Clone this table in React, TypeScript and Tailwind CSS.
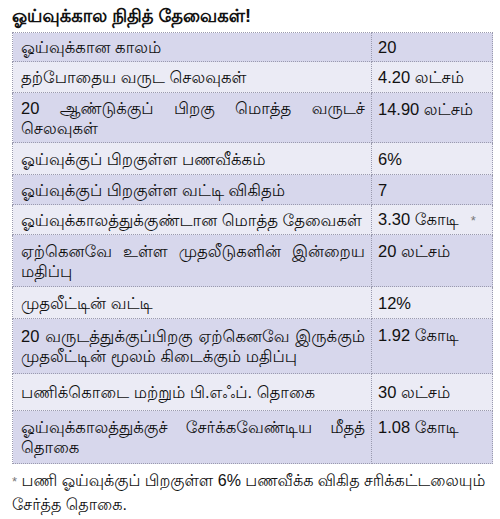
type Row = { label: string; value: string; h: number; two?: boolean; star?: boolean };

const rows: Row[] = [
  { label: "ஓய்வுக்கான காலம்", value: "20", h: 29 },
  { label: "தற்போதைய வருட செலவுகள்", value: "4.20 லட்சம்", h: 31 },
  { label: "20 ஆண்டுக்குப் பிறகு மொத்த வருடச் செலவுகள்", value: "14.90 லட்சம்", h: 50, two: true },
  { label: "ஓய்வுக்குப் பிறகுள்ள பணவீக்கம்", value: "6%", h: 32 },
  { label: "ஓய்வுக்குப் பிறகுள்ள வட்டி விகிதம்", value: "7", h: 30 },
  { label: "ஓய்வுக்காலத்துக்குண்டான மொத்த தேவைகள்", value: "3.30 கோடி", h: 30, star: true },
  { label: "ஏற்கெனவே உள்ள முதலீடுகளின் இன்றைய மதிப்பு", value: "20 லட்சம்", h: 52, two: true },
  { label: "முதலீட்டின் வட்டி", value: "12%", h: 32 },
  {
    label: "20 வருடத்துக்குப்பிறகு ஏற்கெனவே இருக்கும் முதலீட்டின் மூலம் கிடைக்கும் மதிப்பு",
    value: "1.92 கோடி",
    h: 55,
    two: true,
  },
  { label: "பணிக்கொடை மற்றும் பி.எஃப். தொகை", value: "30 லட்சம்", h: 37 },
  { label: "ஓய்வுக்காலத்துக்குச் சேர்க்கவேண்டிய மீதத் தொகை", value: "1.08 கோடி", h: 53, two: true },
];

export default function App() {
  return (
    <div className="h-[519px] w-[500px] bg-white px-3 pt-[5px] font-['Liberation_Sans','Lohit_Tamil','Noto_Sans_Tamil',sans-serif] text-[#111]">
      <h1 className="text-[18px] font-bold leading-[22px]">ஓய்வுக்கால நிதித் தேவைகள்!</h1>
      <table className="mt-[5px] w-[481px] table-fixed border-collapse border border-dotted border-[#9a9aae] text-[16.5px] leading-[20px]">
        <colgroup>
          <col className="w-[359px]" />
          <col />
        </colgroup>
        <tbody>
          {rows.map((r, i) => (
            <tr
              key={i}
              style={{ height: r.h }}
              className={i % 2 === 0 ? "bg-[#d7d7ec]" : "bg-[#ebebf5]"}
            >
              <td className="border border-dotted border-[#9a9aae] py-[2px] pl-2 pr-[6px] text-justify align-middle">
                {r.label}
              </td>
              <td
                className={
                  r.two
                    ? "border border-dotted border-[#9a9aae] px-[6px] pt-[6px] pb-[2px] align-top"
                    : "border border-dotted border-[#9a9aae] px-[6px] py-[2px] align-middle"
                }
              >
                {r.value}
                {r.star ? <span className="ml-3 text-[13px] text-[#777]">*</span> : null}
              </td>
            </tr>
          ))}
        </tbody>
      </table>
      <p className="mt-[5px] text-[16px] leading-[23px]">
        <span className="text-[13px] text-[#777]">*</span> பணி ஓய்வுக்குப் பிறகுள்ள 6% பணவீக்க
        விகித சரிக்கட்டலையும் சேர்த்த தொகை.
      </p>
    </div>
  );
}
